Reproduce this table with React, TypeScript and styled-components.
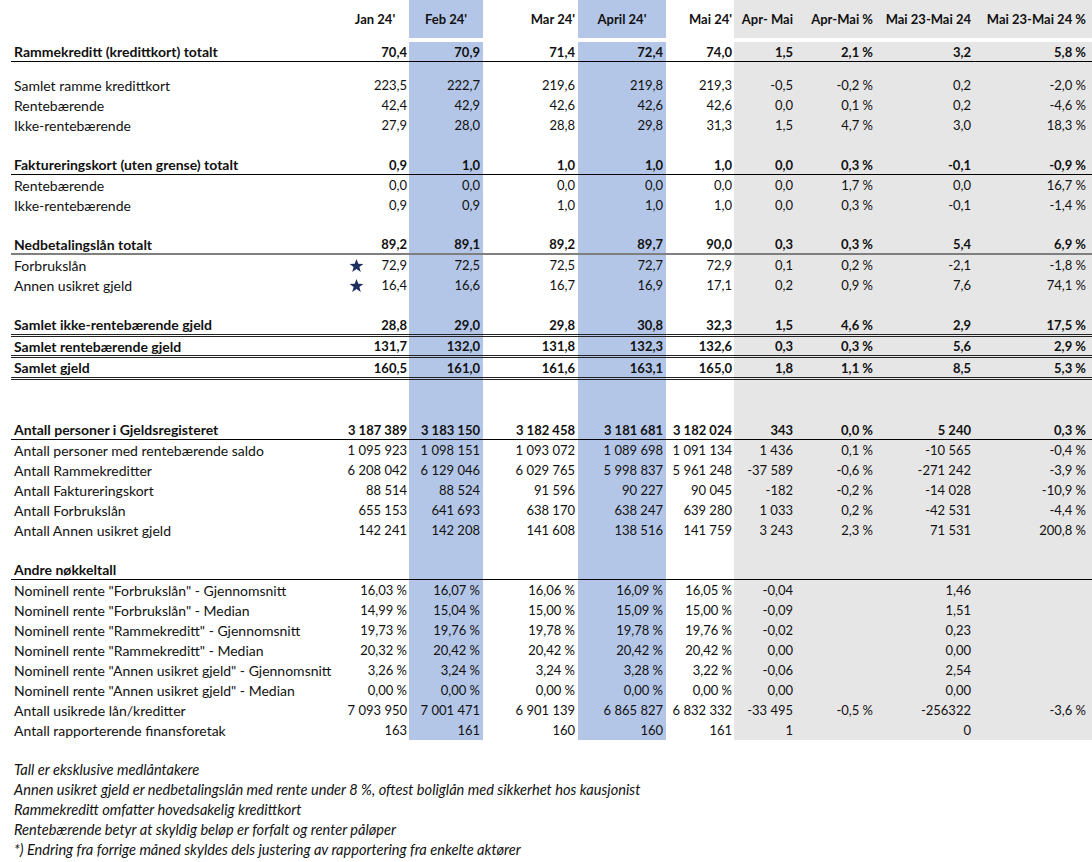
import React from "react";
import styled, { createGlobalStyle, css } from "styled-components";

const Global = createGlobalStyle`
  html, body { margin: 0; padding: 0; background: #fff; }
  body { font-family: Lato, "Open Sans", sans-serif; color: #111; }
`;

const BLUE = "#b4c6e7";
const GRAY = "#e7e6e6";
const COLS = "329px 69px 74px 95px 88px 68px 62px 80px 98px 1fr";

type BorderKind = "none" | "single" | "gray" | "double";

const Page = styled.div`
  width: 1092px;
  height: 862px;
  overflow: hidden;
  display: flex;
  flex-direction: column;
`;

const Sheet = styled.div`
  display: flex;
  flex-direction: column;
  padding-left: 11px;
`;

const Row = styled.div<{ $h: number; $bold?: boolean; $header?: boolean }>`
  display: grid;
  grid-template-columns: ${COLS};
  height: ${(p) => p.$h}px;
  font-size: 13px;
  font-weight: ${(p) => (p.$bold ? 700 : 400)};
  ${(p) =>
    p.$header &&
    css`
      padding-bottom: 4px;
      box-sizing: border-box;
    `}
`;

const borderCss = (b: BorderKind) => {
  switch (b) {
    case "single":
      return "border-bottom: 1px solid #000;";
    case "gray":
      return "border-bottom: 2px solid #7f7f7f;";
    case "double":
      return "border-bottom: 3px double #222;";
    default:
      return "";
  }
};

const Cell = styled.div<{ $bg: string; $align: string; $border: BorderKind; $pad: number }>`
  background: ${(p) => p.$bg};
  display: flex;
  align-items: center;
  justify-content: ${(p) => p.$align};
  padding: 0 ${(p) => p.$pad}px 0 3px;
  white-space: pre;
  box-sizing: border-box;
  ${(p) => borderCss(p.$border)}
`;

const LabelCell = styled(Cell)`
  font-size: 14px;
`;

const StarCell = styled.span`
  flex: 1;
  display: flex;
  align-items: center;
  justify-content: space-between;
  padding-left: 6px;
`;

const Notes = styled.div`
  display: flex;
  flex-direction: column;
  padding: 20px 0 0 14px;
  font-size: 14.6px;
  font-style: italic;
`;

const Note = styled.div`
  height: 20px;
  line-height: 20px;
  white-space: nowrap;
`;

const Star = () => (
  <svg width="15" height="15" viewBox="0 0 24 24">
    <polygon
      points="12,1.5 14.9,9.2 23,9.4 16.6,14.4 18.9,22.3 12,17.7 5.1,22.3 7.4,14.4 1,9.4 9.1,9.2"
      fill="#1f3060"
    />
  </svg>
);

const bgFor = (i: number) => (i === 2 || i === 4 ? BLUE : i >= 6 ? GRAY : "transparent");
const padFor = (i: number) => (i === 9 ? 6 : i === 1 || i === 5 ? 2 : 3);

type RowDef = {
  label?: string;
  vals?: string[];
  h?: number;
  border?: BorderKind;
  bold?: boolean;
  star?: boolean;
};

const rows: RowDef[] = [
  {
    label: "Rammekreditt (kredittkort) totalt",
    vals: ["70,4", "70,9", "71,4", "72,4", "74,0", "1,5", "2,1 %", "3,2", "5,8 %"],
    bold: true,
    border: "single",
  },
  { h: 13 },
  { label: "Samlet ramme kredittkort", vals: ["223,5", "222,7", "219,6", "219,8", "219,3", "-0,5", "-0,2 %", "0,2", "-2,0 %"] },
  { label: "Rentebærende", vals: ["42,4", "42,9", "42,6", "42,6", "42,6", "0,0", "0,1 %", "0,2", "-4,6 %"] },
  { label: "Ikke-rentebærende", vals: ["27,9", "28,0", "28,8", "29,8", "31,3", "1,5", "4,7 %", "3,0", "18,3 %"] },
  {},
  {
    label: "Faktureringskort (uten grense) totalt",
    vals: ["0,9", "1,0", "1,0", "1,0", "1,0", "0,0", "0,3 %", "-0,1", "-0,9 %"],
    bold: true,
    border: "single",
  },
  { label: "Rentebærende", vals: ["0,0", "0,0", "0,0", "0,0", "0,0", "0,0", "1,7 %", "0,0", "16,7 %"] },
  { label: "Ikke-rentebærende", vals: ["0,9", "0,9", "1,0", "1,0", "1,0", "0,0", "0,3 %", "-0,1", "-1,4 %"] },
  {},
  {
    label: "Nedbetalingslån totalt",
    vals: ["89,2", "89,1", "89,2", "89,7", "90,0", "0,3", "0,3 %", "5,4", "6,9 %"],
    bold: true,
    border: "gray",
  },
  { label: "Forbrukslån", star: true, vals: ["72,9", "72,5", "72,5", "72,7", "72,9", "0,1", "0,2 %", "-2,1", "-1,8 %"] },
  { label: "Annen usikret gjeld", star: true, vals: ["16,4", "16,6", "16,7", "16,9", "17,1", "0,2", "0,9 %", "7,6", "74,1 %"] },
  {},
  {
    label: "Samlet ikke-rentebærende gjeld",
    vals: ["28,8", "29,0", "29,8", "30,8", "32,3", "1,5", "4,6 %", "2,9", "17,5 %"],
    bold: true,
    border: "double",
    h: 22,
  },
  {
    label: "Samlet rentebærende gjeld",
    vals: ["131,7", "132,0", "131,8", "132,3", "132,6", "0,3", "0,3 %", "5,6", "2,9 %"],
    bold: true,
    border: "double",
    h: 21,
  },
  {
    label: "Samlet gjeld",
    vals: ["160,5", "161,0", "161,6", "163,1", "165,0", "1,8", "1,1 %", "8,5", "5,3 %"],
    bold: true,
    border: "double",
    h: 22,
  },
  { h: 40 },
  {
    label: "Antall personer i Gjeldsregisteret",
    vals: ["3 187 389", "3 183 150", "3 182 458", "3 181 681", "3 182 024", "343", "0,0 %", "5 240", "0,3 %"],
    bold: true,
    border: "single",
  },
  {
    label: "Antall personer med rentebærende saldo",
    vals: ["1 095 923", "1 098 151", "1 093 072", "1 089 698", "1 091 134", "1 436", "0,1 %", "-10 565", "-0,4 %"],
  },
  {
    label: "Antall Rammekreditter",
    vals: ["6 208 042", "6 129 046", "6 029 765", "5 998 837", "5 961 248", "-37 589", "-0,6 %", "-271 242", "-3,9 %"],
  },
  {
    label: "Antall Faktureringskort",
    vals: ["88 514", "88 524", "91 596", "90 227", "90 045", "-182", "-0,2 %", "-14 028", "-10,9 %"],
  },
  {
    label: "Antall Forbrukslån",
    vals: ["655 153", "641 693", "638 170", "638 247", "639 280", "1 033", "0,2 %", "-42 531", "-4,4 %"],
  },
  {
    label: "Antall Annen usikret gjeld",
    vals: ["142 241", "142 208", "141 608", "138 516", "141 759", "3 243", "2,3 %", "71 531", "200,8 %"],
  },
  {},
  { label: "Andre nøkkeltall", bold: true, border: "single" },
  {
    label: 'Nominell rente "Forbrukslån" - Gjennomsnitt',
    vals: ["16,03 %", "16,07 %", "16,06 %", "16,09 %", "16,05 %", "-0,04", "", "1,46", ""],
  },
  {
    label: 'Nominell rente "Forbrukslån" - Median',
    vals: ["14,99 %", "15,04 %", "15,00 %", "15,09 %", "15,00 %", "-0,09", "", "1,51", ""],
  },
  {
    label: 'Nominell rente "Rammekreditt" - Gjennomsnitt',
    vals: ["19,73 %", "19,76 %", "19,78 %", "19,78 %", "19,76 %", "-0,02", "", "0,23", ""],
  },
  {
    label: 'Nominell rente "Rammekreditt" - Median',
    vals: ["20,32 %", "20,42 %", "20,42 %", "20,42 %", "20,42 %", "0,00", "", "0,00", ""],
  },
  {
    label: 'Nominell rente "Annen usikret gjeld" - Gjennomsnitt',
    vals: ["3,26 %", "3,24 %", "3,24 %", "3,28 %", "3,22 %", "-0,06", "", "2,54", ""],
  },
  {
    label: 'Nominell rente "Annen usikret gjeld" - Median',
    vals: ["0,00 %", "0,00 %", "0,00 %", "0,00 %", "0,00 %", "0,00", "", "0,00", ""],
  },
  {
    label: "Antall usikrede lån/kreditter",
    vals: ["7 093 950", "7 001 471", "6 901 139", "6 865 827", "6 832 332", "-33 495", "-0,5 %", "-256322", "-3,6 %"],
  },
  {
    label: "Antall rapporterende finansforetak",
    vals: ["163", "161", "160", "160", "161", "1", "", "0", ""],
  },
];

const headers: { text: string; align: string }[] = [
  { text: "Jan 24'", align: "center" },
  { text: "Feb 24'", align: "center" },
  { text: "Mar 24'", align: "flex-end" },
  { text: "April 24'", align: "center" },
  { text: "Mai 24'", align: "flex-end" },
  { text: "Apr- Mai", align: "flex-end" },
  { text: "Apr-Mai %", align: "flex-end" },
  { text: "Mai 23-Mai 24", align: "flex-end" },
  { text: "Mai 23-Mai 24 %", align: "flex-end" },
];

const notes = [
  "Tall er eksklusive medlåntakere",
  "Annen usikret gjeld er nedbetalingslån med rente under 8 %, oftest boliglån med sikkerhet hos kausjonist",
  "Rammekreditt omfatter hovedsakelig kredittkort",
  "Rentebærende betyr at skyldig beløp er forfalt og renter påløper",
  "*) Endring fra forrige måned skyldes dels justering av rapportering fra enkelte aktører",
];

export default function App() {
  return (
    <Page>
      <Global />
      <Sheet>
        <Row $h={42} $bold $header>
          <LabelCell $bg="transparent" $align="flex-start" $border="none" $pad={3} />
          {headers.map((h, i) => (
            <Cell key={i} $bg={bgFor(i + 1)} $align={h.align} $border="none" $pad={padFor(i + 1)}>
              {h.text}
            </Cell>
          ))}
        </Row>
        {rows.map((r, ri) => {
          const border = r.border ?? "none";
          const vals = r.vals ?? Array(9).fill("");
          return (
            <Row key={ri} $h={r.h ?? 20} $bold={r.bold}>
              <LabelCell $bg="transparent" $align="flex-start" $border={border} $pad={3}>
                {r.label ?? ""}
              </LabelCell>
              {vals.map((v, i) => (
                <Cell key={i} $bg={bgFor(i + 1)} $align="flex-end" $border={border} $pad={padFor(i + 1)}>
                  {i === 0 && r.star ? (
                    <StarCell>
                      <Star />
                      <span>{v}</span>
                    </StarCell>
                  ) : (
                    v
                  )}
                </Cell>
              ))}
            </Row>
          );
        })}
      </Sheet>
      <Notes>
        {notes.map((n, i) => (
          <Note key={i}>{n}</Note>
        ))}
      </Notes>
    </Page>
  );
}
